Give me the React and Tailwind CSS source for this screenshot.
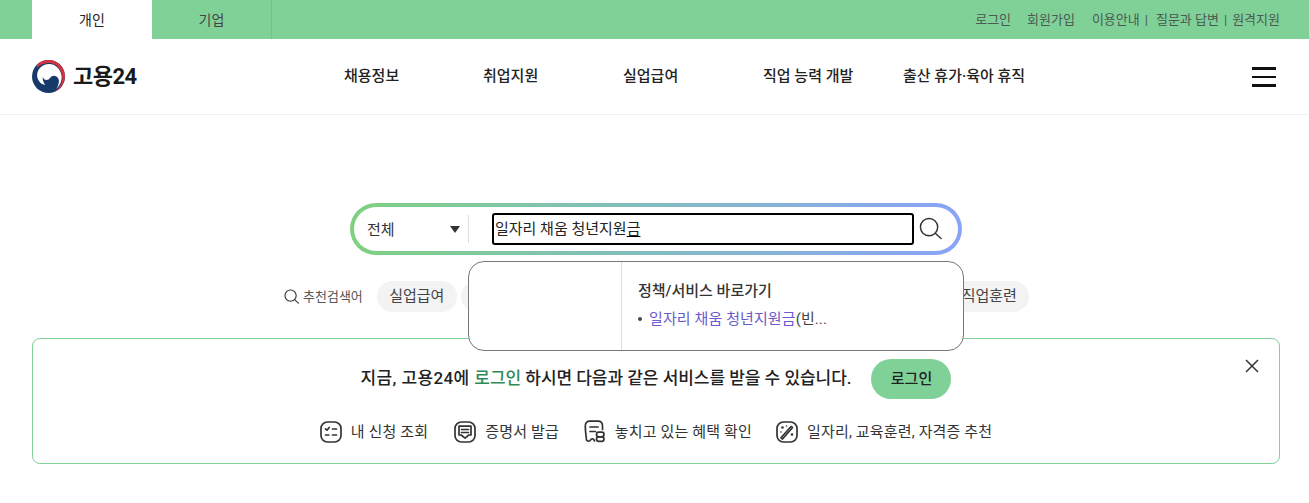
import React from "react";

const font = { fontFamily: 'Roboto, "Noto Sans CJK KR", "Noto Sans", sans-serif' };

function Logo() {
  return (
    <svg width="33" height="33" viewBox="0 0 32 32">
      <circle cx="16" cy="16" r="16" fill="#173a6b" />
      <path d="M5 4.2 A16 16 0 0 1 32 16 A16 16 0 0 1 22.5 30.6 C26.5 27 29.6 22.5 29.4 17 C29 9.5 23.5 2.8 16 3 C11.5 3.2 8 4.5 5 7.5Z" fill="#d2343f" />
      <path d="M5 14 C5.5 8 10.5 3.8 16.5 3.8 C23.5 3.8 28.8 10 28.8 17 C28.8 21 27 25 23.5 28 C26 24.2 26.8 21 25.5 18 C23.5 14.5 19.5 14.5 17.5 17.5 C15.5 20.5 11 20 10.5 16 C10 20 11.5 22.8 13 24 C8.5 24 4.6 19 5 14Z" fill="#fff" />
    </svg>
  );
}

function Magnifier({ size, sw = 1.5, color = "#333" }) {
  return (
    <svg width={size} height={size} viewBox="0 0 24 24" fill="none" stroke={color} strokeWidth={sw}>
      <circle cx="10.5" cy="10.5" r="9" />
      <path d="M17 17 L23 22.5" strokeLinecap="round" />
    </svg>
  );
}

function Frame() {
  return <rect x="1" y="1" width="20" height="20" rx="6.5" />;
}

function IconList() {
  return (
    <svg width="22" height="22" viewBox="0 0 22 22" fill="none" stroke="#333" strokeWidth="1.7" strokeLinecap="round" strokeLinejoin="round">
      <Frame />
      <path d="M5.5 7.8 L7 9.2 L9.2 6.5" />
      <path d="M12.5 8 H16.5" />
      <path d="M5.5 14 H8.8" />
      <path d="M12.5 14 H16.5" />
    </svg>
  );
}

function IconDoc() {
  return (
    <svg width="22" height="22" viewBox="0 0 22 22" fill="none" stroke="#333" strokeWidth="1.7" strokeLinecap="round" strokeLinejoin="round">
      <Frame />
      <path d="M5 5.2 H17 V14 H14.8 L11 17.2 L7.2 14 H5Z" />
      <path d="M7.5 8.5 H14.5" />
      <path d="M7.5 11.5 H14.5" />
    </svg>
  );
}

function IconReceipt() {
  return (
    <svg width="22" height="23" viewBox="0 0 22 23" fill="none" stroke="#333" strokeWidth="1.7" strokeLinecap="round" strokeLinejoin="round">
      <path d="M10.5 21 C10 18.5 7.5 18 6.5 20 C6 21.5 3 21.5 2.5 20 C2 16 1.3 9 1.3 6 C1.3 2.8 3 1.2 6 1.2 H14 C17 1.2 18.5 2.8 18.5 6 V9.5" />
      <path d="M6 7 H14" />
      <path d="M6 11.5 H11.5" />
      <rect x="12.5" y="12.2" width="7.5" height="4.6" rx="2.3" />
      <rect x="12.5" y="16.8" width="7.5" height="4.6" rx="2.3" />
    </svg>
  );
}

function IconWand() {
  return (
    <svg width="22" height="22" viewBox="0 0 22 22" fill="none" stroke="#333" strokeWidth="1.7" strokeLinecap="round" strokeLinejoin="round">
      <Frame />
      <path d="M5 16.8 L14.8 5.8 C15.5 5 16.8 6.2 16.2 7 L6.5 18Z" />
      <circle cx="6.5" cy="6.5" r="1.3" fill="#333" stroke="none" />
      <circle cx="10.5" cy="5" r="0.8" fill="#333" stroke="none" />
      <circle cx="16" cy="13.5" r="1.3" fill="#333" stroke="none" />
      <circle cx="5" cy="11" r="0.8" fill="#333" stroke="none" />
    </svg>
  );
}

function Feature({ icon, children, className = "" }) {
  return (
    <div className={`flex items-center gap-[9px] ${className}`}>
      {icon}
      <span className="text-[15px] tracking-[0.15px] text-[#333] leading-[22px]">{children}</span>
    </div>
  );
}

export default function App() {
  return (
    <div style={font} className="w-full bg-white text-[#222] h-[503px] overflow-hidden">
      {/* top bar */}
      <div className="h-[39px] bg-[#80d198] flex items-stretch pl-8 pr-[29px]">
        <div className="w-[120px] bg-white flex items-center justify-center text-sm text-[#222]">개인</div>
        <div className="w-[120px] border-r border-[#70c28a] flex items-center justify-center text-sm text-[#444]">기업</div>
        <div className="ml-auto flex items-center text-[13px] text-[#4a5a50]">
          <span>로그인</span>
          <span className="ml-4">회원가입</span>
          <span className="ml-[17px]">이용안내</span>
          <span className="ml-[5px]">|</span>
          <span className="ml-[8px]">질문과 답변</span>
          <span className="ml-[5px]">|</span>
          <span className="ml-[5px]">원격지원</span>
        </div>
      </div>

      {/* header */}
      <div className="h-[76px] border-b border-[#eeeeee] flex items-center pl-8 pr-[33px]">
        <div className="flex items-center w-[312px] shrink-0 gap-2">
          <Logo />
          <span className="text-[22px] font-bold tracking-[-0.5px] text-[#1a1a1a]">고용24</span>
        </div>
        <nav className="flex text-[15px] font-medium text-[#222]">
          <span className="w-[139px]">채용정보</span>
          <span className="w-[140px]">취업지원</span>
          <span className="w-[140px]">실업급여</span>
          <span className="w-[140px]">직업 능력 개발</span>
          <span>출산 휴가·육아 휴직</span>
        </nav>
        <div className="ml-auto flex flex-col gap-[6px] w-6">
          <span className="h-[3px] bg-[#111]" />
          <span className="h-[2px] bg-[#111]" />
          <span className="h-[3px] bg-[#111]" />
        </div>
      </div>

      {/* search */}
      <div className="relative">
        <div className="pt-[88px] flex justify-center">
          <div className="w-[612px] h-[52px] rounded-full p-1 bg-gradient-to-r from-[#7fd07f] to-[#8aa2f8] ml-[3px]">
            <div className="w-full h-full rounded-full bg-white flex items-center pl-[13px]">
              <span className="w-[83px] pt-[2px] text-[15px] leading-none text-[#333]">전체</span>
              <svg width="10" height="7" viewBox="0 0 10 7" className="mr-[8px]"><path d="M0 0 H10 L5 7Z" fill="#333" /></svg>
              <span className="w-px h-[28px] bg-[#dddddd]" />
              <div className="ml-[23px] w-[422px] h-[32px] rounded-[3px] border-2 border-black flex items-center pl-[1px] text-[15px] text-[#222]">
                일자리 채움 청년지원<span className="underline underline-offset-2 decoration-black">금</span>
              </div>
              <span className="ml-[5px] mb-[2px] flex"><Magnifier size={23} /></span>
            </div>
          </div>
        </div>

        {/* recommended */}
        <div className="mt-[26px] h-[31px] pl-[284px] flex items-center">
          <Magnifier size={15} sw={1.8} />
          <span className="ml-1 mr-[14px] text-[13px] text-[#555]">추천검색어</span>
          <span className="w-20 h-[31px] rounded-full bg-[#f3f3f3] flex items-center justify-center text-[15px] text-[#444]">실업급여</span>
          <span className="ml-1 w-[480px] h-[31px] rounded-full bg-[#f3f3f3]" />
          <span className="ml-2 w-20 h-[31px] pl-[1px] rounded-full bg-[#f3f3f3] flex items-center justify-center text-[15px] text-[#444]">직업훈련</span>
        </div>

        {/* banner */}
        <div className="relative mt-[26px] ml-8 mr-[29px] h-[126px] border border-[#80d198] rounded-lg flex flex-col items-center">
          <div className="mt-5 h-10 flex items-center">
            <span className="text-[17px] tracking-[-0.04px] font-medium text-[#222]">
              <span className="tracking-[0.4px]">지금, 고용24에 </span><span className="text-[#2e8b57]">로그인</span> 하시면 다음과 같은 서비스를 받을 수 있습니다.
            </span>
            <span className="ml-5 w-20 h-10 rounded-full bg-[#80d198] flex items-center justify-center text-[15px] font-medium text-[#222]">로그인</span>
          </div>
          <div className="mt-[21px] flex items-center">
            <Feature icon={<IconList />}>내 신청 조회</Feature>
            <Feature icon={<IconDoc />} className="ml-[26px]">증명서 발급</Feature>
            <Feature icon={<IconReceipt />} className="ml-[25px]">놓치고 있는 혜택 확인</Feature>
            <Feature icon={<IconWand />} className="ml-[24px]">일자리, 교육훈련, 자격증 추천</Feature>
          </div>
          <svg width="14" height="14" viewBox="0 0 14 14" className="absolute top-[20px] right-[20px]" fill="none" stroke="#333" strokeWidth="1.5">
            <path d="M1 1 L13 13 M13 1 L1 13" />
          </svg>
        </div>

        {/* autocomplete dropdown */}
        <div className="absolute left-[468px] top-[146px] w-[496px] h-[90px] bg-white border border-[#777] rounded-2xl flex">
          <div className="w-[153px] border-r border-[#dddddd]" />
          <div className="pl-4 pt-[18px]">
            <div className="text-[15px] font-medium text-[#333] leading-[22px]">정책/서비스 바로가기</div>
            <div className="mt-[6px] text-[15px] tracking-[0.1px] leading-[22px] flex items-center">
              <span className="w-[4px] h-[4px] rounded-full bg-[#444] mr-[7px]" />
              <span className="text-[#6a5acd]">일자리 채움 청년지원금</span>
              <span className="text-[#444]">(빈...</span>
            </div>
          </div>
        </div>
      </div>
    </div>
  );
}
